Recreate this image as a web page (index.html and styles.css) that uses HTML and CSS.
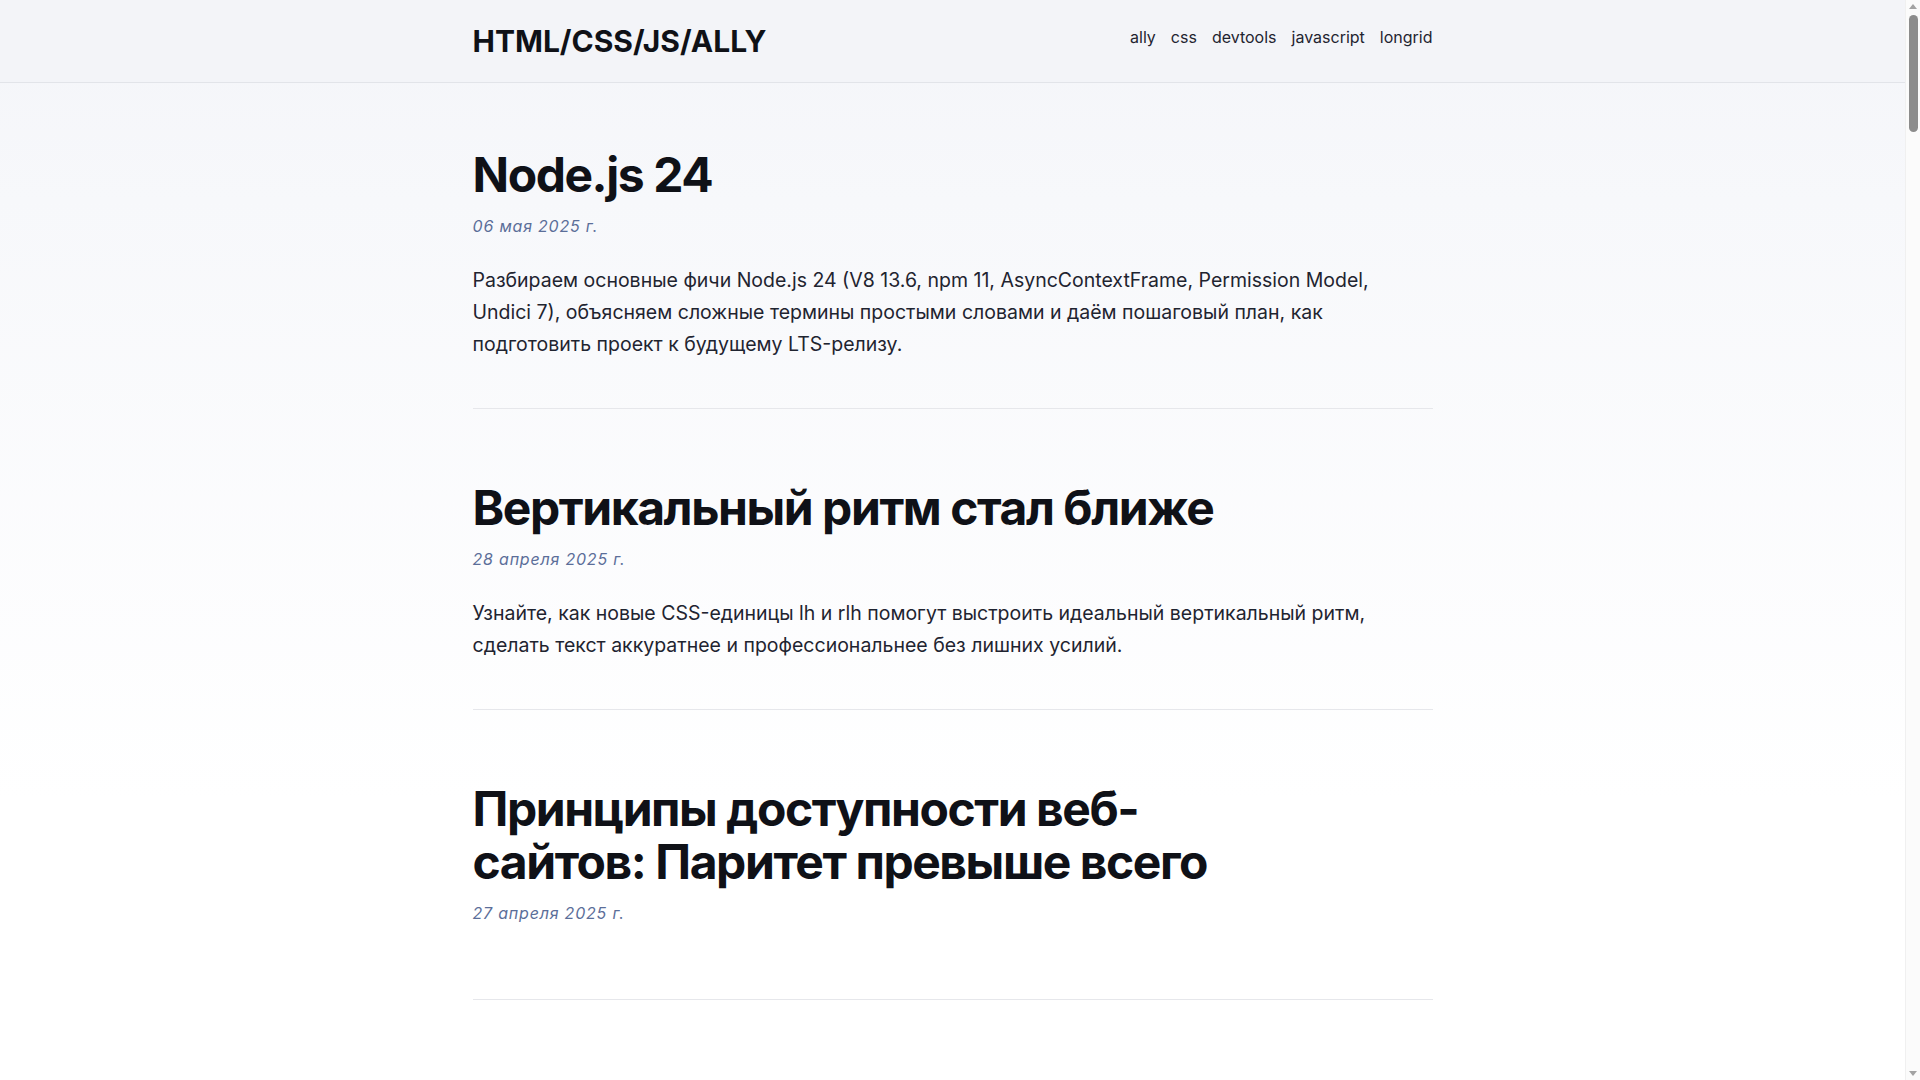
FILE: index.html
```html
<!DOCTYPE html>
<html lang="ru">
<head>
<meta charset="utf-8">
<title>HTML/CSS/JS/ALLY</title>
<link rel="stylesheet" href="styles.css">
</head>
<body>
<div class="page">
  <header class="site-header">
    <div class="container header-inner">
      <a class="logo" href="#">HTML/CSS/JS/ALLY</a>
      <nav class="nav">
        <a href="#">ally</a>
        <a href="#">css</a>
        <a href="#">devtools</a>
        <a href="#">javascript</a>
        <a href="#">longrid</a>
      </nav>
    </div>
  </header>
  <main class="container posts">
    <article class="post">
      <h2 class="post-title"><a href="#">Node.js 24</a></h2>
      <time class="post-date">06 мая 2025 г.</time>
      <p class="post-excerpt">Разбираем основные фичи Node.js 24 (V8 13.6, npm 11, AsyncContextFrame, Permission Model, Undici 7), объясняем сложные термины простыми словами и даём пошаговый план, как подготовить проект к будущему LTS-релизу.</p>
    </article>
    <article class="post">
      <h2 class="post-title"><a href="#">Вертикальный ритм стал ближе</a></h2>
      <time class="post-date">28 апреля 2025 г.</time>
      <p class="post-excerpt">Узнайте, как новые CSS-единицы lh и rlh помогут выстроить идеальный вертикальный ритм, сделать текст аккуратнее и профессиональнее без лишних усилий.</p>
    </article>
    <article class="post">
      <h2 class="post-title"><a href="#">Принципы доступности веб-сайтов: Паритет превыше всего</a></h2>
      <time class="post-date">27 апреля 2025 г.</time>
      <p class="post-excerpt"></p>
    </article>
    <article class="post">
      <h2 class="post-title"><a href="#">Доступные формы на практике</a></h2>
      <time class="post-date">20 апреля 2025 г.</time>
      <p class="post-excerpt">Как подписывать поля, показывать ошибки и помогать пользователям скринридеров заполнять формы быстрее.</p>
    </article>
    <article class="post">
      <h2 class="post-title"><a href="#">Контейнерные запросы</a></h2>
      <time class="post-date">12 апреля 2025 г.</time>
      <p class="post-excerpt">Разбираем, как компоненты подстраиваются под размер родителя, а не окна браузера.</p>
    </article>
  </main>
</div>
<div class="scrollbar" aria-hidden="true">
  <span class="sb-arrow sb-up"></span>
  <span class="sb-thumb"></span>
  <span class="sb-arrow sb-down"></span>
</div>
</body>
</html>
```
FILE: styles.css
```css
* { box-sizing: border-box; }

html, body {
  margin: 0;
  padding: 0;
}

body {
  font-family: Inter, "Noto Sans", sans-serif;
  color: #1f2430;
  background: #ffffff linear-gradient(180deg, #f4f5f9 0px, #f7f8fb 200px, #ffffff 800px) no-repeat;
}

.page {
  margin-right: 15px;
}

a { color: inherit; text-decoration: none; }

.container {
  max-width: 960px;
  margin: 0 auto;
}

.site-header {
  background: #f3f4f8;
  border-bottom: 1px solid #e2e4e9;
}

.header-inner {
  display: flex;
  align-items: center;
  justify-content: space-between;
  height: 82px;
}

.logo {
  font-family: Inter, sans-serif;
  font-weight: 700;
  font-size: 30px;
  line-height: 36px;
  color: #0f1117;
}

.nav {
  display: flex;
  gap: 15px;
  font-size: 16px;
  line-height: 24px;
  color: #1f2430;
  margin-bottom: 8px;
}

.posts {
  padding-bottom: 120px;
}

.post {
  padding: 72px 0 48px;
  border-bottom: 1px solid #e6e7eb;
}

.post:first-child {
  padding-top: 65px;
}

.post-title {
  margin: 0 0 13px;
  max-width: 800px;
  font-family: Inter, sans-serif;
  font-weight: 700;
  font-size: 48px;
  line-height: 53px;
  letter-spacing: -0.03em;
  color: #0f1117;
}

.post-date {
  display: block;
  font-size: 16px;
  line-height: 24px;
  font-style: italic;
  letter-spacing: 0.05em;
  color: #5b6e99;
}

.post-excerpt {
  margin: 26px 0 0;
  font-size: 19.5px;
  line-height: 32px;
  color: #1f2430;
}

.scrollbar {
  position: fixed;
  top: 0;
  right: 0;
  width: 15px;
  height: 100vh;
  background: #fbfbfb;
  border-left: 1px solid #f0f0f0;
  display: flex;
  flex-direction: column;
  align-items: center;
}

.sb-arrow {
  width: 0;
  height: 0;
  border-left: 4px solid transparent;
  border-right: 4px solid transparent;
}

.sb-up {
  margin-top: 4px;
  border-bottom: 5px solid #a3a3a3;
}

.sb-down {
  margin-top: auto;
  margin-bottom: 4px;
  border-top: 5px solid #a3a3a3;
}

.sb-thumb {
  margin-top: 6px;
  width: 9px;
  height: 117px;
  border-radius: 5px;
  background: #8c8c8c;
}
```
